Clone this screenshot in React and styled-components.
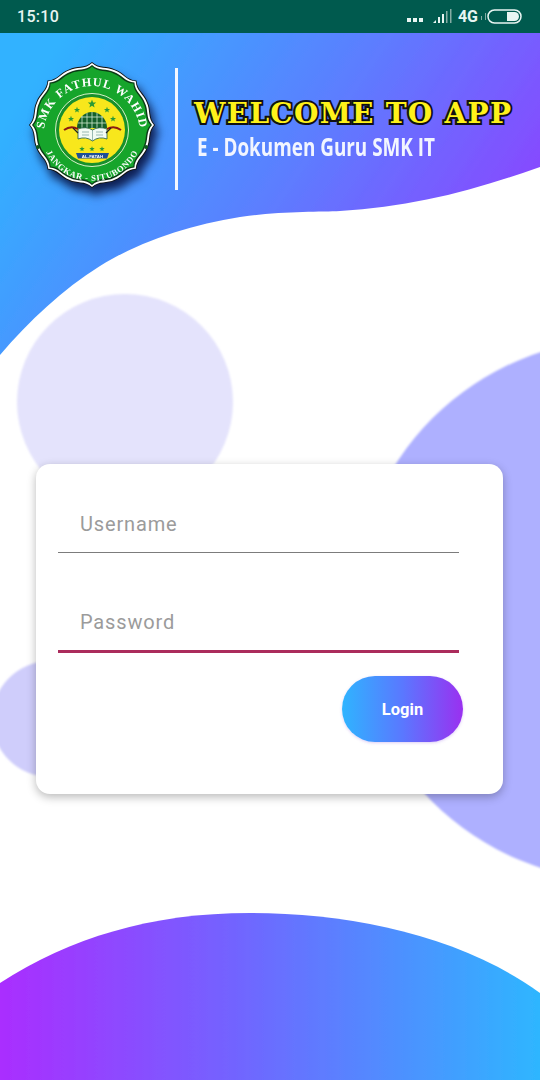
import React from "react";
import styled, { createGlobalStyle } from "styled-components";

const GlobalStyle = createGlobalStyle`
  html, body {
    margin: 0;
    padding: 0;
    background: #fff;
  }
  * {
    box-sizing: border-box;
  }
`;

// badge outline: eight pointed lobes, each side leaves the tip inward and then bulges
function badgePath(cx, cy, r) {
  const step = (Math.PI * 2) / 8;
  const pt = (a, k) =>
    `${(cx + Math.cos(a) * r * k).toFixed(1)} ${(cy + Math.sin(a) * r * k).toFixed(1)}`;
  let d = `M${pt(-Math.PI / 2, 1)}`;
  for (let i = 0; i < 8; i++) {
    const a = -Math.PI / 2 + i * step;
    d += `C${pt(a + 0.16 * step, 0.9)} ${pt(a + 0.32 * step, 0.975)} ${pt(a + 0.5 * step, 0.955)}`;
    d += `C${pt(a + 0.68 * step, 0.975)} ${pt(a + 0.84 * step, 0.9)} ${pt(a + step, 1)}`;
  }
  return d + "Z";
}

function Star({ x, y, size = 3.2, fill = "#2c9a35" }) {
  const pts = [];
  for (let i = 0; i < 10; i++) {
    const a = (i / 10) * Math.PI * 2 - Math.PI / 2;
    const r = i % 2 ? size * 0.42 : size;
    pts.push(`${(x + Math.cos(a) * r).toFixed(1)},${(y + Math.sin(a) * r).toFixed(1)}`);
  }
  return <polygon points={pts.join(" ")} fill={fill} />;
}

function Logo() {
  return (
    <LogoSvg viewBox="0 0 130 130" width="130" height="130">
      <defs>
        <path id="ringTop" d="M17 74 A48 48 0 0 1 113 74" />
        <path id="ringBottom" d="M14 70 A51 51 0 0 0 116 70" />
      </defs>
      <path d={badgePath(65, 65, 63)} fill="#111" />
      <path d={badgePath(65, 65, 62)} fill="#fff" />
      <path d={badgePath(65, 65, 60)} fill="#0c3a16" />
      <path d={badgePath(65, 65, 58.5)} fill="#16a52b" />
      <circle cx="65" cy="70" r="36.5" fill="#18902c" stroke="#d9f2c8" strokeWidth="1" />
      <circle cx="65" cy="70" r="33" fill="#f8e71c" />
      <RingText fontSize="12" letterSpacing="1.1">
        <textPath href="#ringTop" startOffset="50%" textAnchor="middle">
          SMK FATHUL WAHID
        </textPath>
      </RingText>
      <RingText fontSize="8.6" letterSpacing="0.7">
        <textPath href="#ringBottom" startOffset="50%" textAnchor="middle">
          JANGKAR - SITUBONDO
        </textPath>
      </RingText>
      <circle cx="11" cy="87" r="2" fill="#0c5a1e" />
      <circle cx="119" cy="87" r="2" fill="#0c5a1e" />
      <Star x={65} y={44} size={4.4} />
      <Star x={50} y={50} />
      <Star x={80} y={50} />
      <Star x={44} y={59} />
      <Star x={86} y={59} />
      <Star x={55} y={89} size={2.8} />
      <Star x={65} y={89} size={2.8} />
      <Star x={75} y={89} size={2.8} />
      <path d="M50 68 A15 16 0 0 1 80 68Z" fill="#155f2b" />
      <path
        d="M55 68V56M60 68V53M65 68V52M70 68V53M75 68V56M51 63H79M54 57H76"
        stroke="#cfe8cf"
        strokeWidth="0.8"
        fill="none"
      />
      <path
        d="M51 69 Q59 66 65.5 70 Q72 66 80 69 L80 79 Q72 76 65.5 81 Q59 76 51 79Z"
        fill="#f2fbf4"
        stroke="#1d5a44"
        strokeWidth="0.8"
      />
      <path d="M65.5 70V81M55 72H62M55 75H62M69 72H76M69 75H76" stroke="#5d8f86" strokeWidth="0.6" />
      <path d="M37 70 Q44 65 51 69" stroke="#8c1a12" strokeWidth="2" fill="none" />
      <path d="M94 70 Q87 65 80 69" stroke="#8c1a12" strokeWidth="2" fill="none" />
      <path d="M46 68 L51 73 M84 68 L79 73" stroke="#222" strokeWidth="1.2" />
      <path d="M49 93 L82 93 L80 98.5 L51 98.5Z" fill="#1d4f96" />
      <RibbonText x="65.5" y="97.6" fontSize="4.4" textAnchor="middle">
        AL-FATAH
      </RibbonText>
    </LogoSvg>
  );
}

function BatteryIcon() {
  return (
    <svg width="35" height="15" viewBox="0 0 35 15">
      <rect x="1" y="1" width="33" height="13" rx="6.5" fill="none" stroke="#e8f5f2" strokeWidth="1.5" />
      <path d="M20 3H27.5a4.5 4.5 0 0 1 0 9H20Z" fill="#e8f5f2" />
    </svg>
  );
}

function SignalIcon() {
  return (
    <svg width="19" height="15" viewBox="0 0 19 15">
      <path d="M0 14 L3 11 V14Z" fill="#e8f5f2" />
      <rect x="5" y="8" width="2" height="6" fill="#e8f5f2" />
      <rect x="9" y="5" width="2" height="9" fill="#e8f5f2" />
      <rect x="13" y="2" width="1.5" height="12" fill="#84aca4" />
      <rect x="17" y="0" width="1.5" height="14" fill="#84aca4" />
    </svg>
  );
}

function TinySignalIcon() {
  return (
    <svg width="6" height="7" viewBox="0 0 6 7">
      <rect x="0" y="3" width="1" height="4" fill="#84aca4" />
      <rect x="4" y="0" width="1" height="7" fill="#84aca4" />
    </svg>
  );
}

export default function App() {
  return (
    <Page>
      <GlobalStyle />
      <Backdrop viewBox="0 0 540 1080" width="540" height="1080">
        <defs>
          <linearGradient id="topWave" x1="0" y1="0.3" x2="1" y2="0.7">
            <stop offset="0" stopColor="#30b2ff" />
            <stop offset="0.5" stopColor="#5c7eff" />
            <stop offset="1" stopColor="#903eff" />
          </linearGradient>
          <linearGradient id="bottomWave" x1="0" y1="0.5" x2="1" y2="0.5">
            <stop offset="0" stopColor="#aa2dff" />
            <stop offset="0.45" stopColor="#7066ff" />
            <stop offset="1" stopColor="#2eb6ff" />
          </linearGradient>
          <filter id="soft">
            <feGaussianBlur stdDeviation="1.2" />
          </filter>
          <filter id="edge">
            <feGaussianBlur stdDeviation="0.5" />
          </filter>
        </defs>
        <circle cx="125" cy="402" r="108" fill="#e4e3fc" filter="url(#soft)" />
        <circle cx="50" cy="719" r="58" fill="#cfcdfb" filter="url(#soft)" />
        <circle cx="624" cy="610" r="271" fill="#aeb0ff" filter="url(#soft)" />
        <path
          d="M0 33H540V167C470 192 410 207 340 211C320 212 280 211 240 217C190 225 140 241 100 266C62 290 30 320 0 355Z"
          fill="url(#topWave)"
          filter="url(#edge)"
        />
        <path
          d="M0 983C70 938 150 913 250 913C350 913 460 935 540 993V1080H0Z"
          fill="url(#bottomWave)"
          filter="url(#edge)"
        />
      </Backdrop>

      <StatusBar>
        <Clock>15:10</Clock>
        <StatusIcons>
          <Dots>
            <i />
            <i />
            <i />
          </Dots>
          <SignalIcon />
          <NetworkLabel>4G</NetworkLabel>
          <TinySignalIcon />
          <BatteryIcon />
        </StatusIcons>
      </StatusBar>

      <Header>
        <Logo />
        <Divider />
        <HeaderText>
          <Welcome>WELCOME TO APP</Welcome>
          <Subtitle>E - Dokumen Guru SMK IT</Subtitle>
        </HeaderText>
      </Header>

      <Card>
        <Field placeholder="Username" type="text" />
        <Field placeholder="Password" type="password" $active />
        <Actions>
          <LoginButton type="button">Login</LoginButton>
        </Actions>
      </Card>
    </Page>
  );
}

const Page = styled.div`
  position: relative;
  width: 540px;
  height: 1080px;
  overflow: hidden;
  background: #fff;
  font-family: Roboto, "Liberation Sans", sans-serif;
`;

const Backdrop = styled.svg`
  position: absolute;
  inset: 0;
`;

const StatusBar = styled.div`
  position: relative;
  display: flex;
  align-items: center;
  justify-content: space-between;
  height: 33px;
  padding: 0 18px 1px 17px;
  background: #005a4e;
  color: #e8f5f2;
`;

const Clock = styled.span`
  font-size: 16px;
  font-weight: 500;
  letter-spacing: 0.3px;
`;

const StatusIcons = styled.div`
  display: flex;
  align-items: center;
`;

const Dots = styled.div`
  display: flex;
  gap: 2px;
  margin: 7px 10px 0 0;

  i {
    width: 4px;
    height: 4px;
    background: #e8f5f2;
  }
`;

const NetworkLabel = styled.span`
  margin: 0 3px 0 6px;
  font-size: 16px;
  font-weight: 700;
`;

const Header = styled.header`
  position: relative;
  display: flex;
  align-items: flex-start;
  height: 431px;
  padding: 27px 0 0 27px;
`;

const LogoSvg = styled.svg`
  flex-shrink: 0;
  filter: drop-shadow(4px 8px 5px rgba(0, 0, 40, 0.8));
`;

const RingText = styled.text`
  font-family: "Liberation Serif", serif;
  font-weight: 700;
  fill: #fff;
`;

const RibbonText = styled.text`
  font-family: "Liberation Sans", sans-serif;
  font-weight: 700;
  fill: #fff;
`;

const Divider = styled.div`
  width: 3px;
  height: 122px;
  margin: 8px 0 0 18px;
  background: #f4f6ff;
`;

const HeaderText = styled.div`
  display: flex;
  flex-direction: column;
  margin: 39px 0 0 16px;
`;

const Welcome = styled.div`
  font-family: "DejaVu Serif", serif;
  font-size: 28px;
  font-weight: 700;
  line-height: 30px;
  white-space: nowrap;
  color: #fff21a;
  letter-spacing: 1.3px;
  -webkit-text-stroke: 4px #111;
  paint-order: stroke fill;
`;

const Subtitle = styled.div`
  margin: 2px 0 0 3px;
  font-family: "Open Sans", sans-serif;
  font-size: 25px;
  font-weight: 700;
  line-height: 30px;
  white-space: nowrap;
  color: #f2f5ff;
  transform: scaleX(0.755);
  transform-origin: left center;
`;

const Card = styled.form`
  position: relative;
  display: flex;
  flex-direction: column;
  width: 467px;
  height: 330px;
  margin-left: 36px;
  padding: 22px 44px 0 22px;
  background: #fff;
  border-radius: 14px;
  box-shadow: 0 3px 10px rgba(0, 0, 0, 0.28);
`;

const Field = styled.input`
  display: block;
  width: 100%;
  height: ${({ $active }) => ($active ? "69px" : "67px")};
  margin-bottom: ${({ $active }) => ($active ? "0" : "31px")};
  padding: 10px 22px 0;
  border: 0;
  border-bottom: ${({ $active }) => ($active ? "3px solid #ab2c5c" : "1px solid #7c7c7c")};
  outline: 0;
  background: transparent;
  font-family: Roboto, sans-serif;
  font-size: 20px;
  letter-spacing: 0.85px;

  &::placeholder {
    color: #9b9b9b;
    opacity: 1;
  }
`;

const Actions = styled.div`
  display: flex;
  justify-content: flex-end;
  margin: 23px -4px 0 0;
`;

const LoginButton = styled.button`
  width: 121px;
  height: 66px;
  border: 0;
  border-radius: 33px;
  background: linear-gradient(90deg, #2fb4ff, #5a78ff 50%, #9a30f0);
  box-shadow: 0 1px 3px rgba(120, 60, 220, 0.25);
  color: #fff;
  font-family: Roboto, sans-serif;
  font-size: 16.5px;
  font-weight: 700;
`;
